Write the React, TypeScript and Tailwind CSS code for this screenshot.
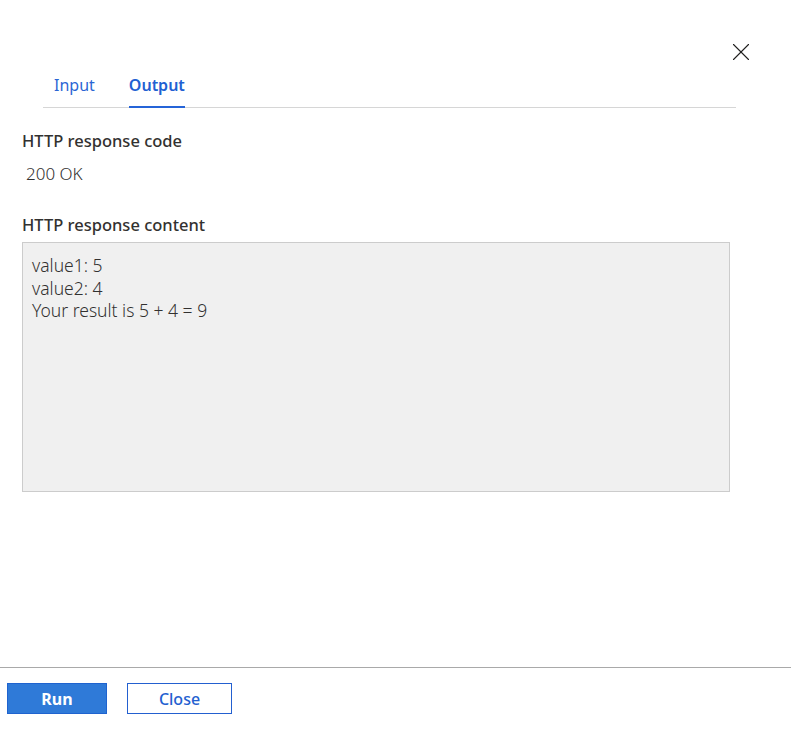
import { X } from "lucide-react";

export default function App() {
  return (
    <div
      className="w-[791px] h-[737px] bg-white flex flex-col text-[#323130] overflow-hidden"
      style={{ fontFamily: '"Noto Sans", "Open Sans", sans-serif' }}
    >
      {/* HEADER */}
      <div className="flex justify-end pt-[37px] pr-[35px] h-[66px]">
        <X size={30} strokeWidth={0.9} className="text-[#201f1e]" />
      </div>

      {/* TABS */}
      <div className="ml-[43px] mr-[55px] flex gap-[34px] pl-[11px] border-b border-[#d6d6d6] h-[42px]">
        <div className="text-[16px] text-[#2b66d4] pt-[7px]">Input</div>
        <div className="text-[16px] font-semibold text-[#2160d2] pt-[7px] border-b-2 border-[#2564d8] -mb-px">
          Output
        </div>
      </div>

      {/* BODY */}
      <div className="px-[22px] flex-1">
        <h3 className="text-[16.5px] font-medium mt-[22px] leading-[22px]">HTTP response code</h3>
        <p className="text-[17px] font-light ml-[4px] mt-[11px] leading-[22px]">200 OK</p>

        <h3 className="text-[16.5px] font-medium mt-[29px] leading-[22px]">HTTP response content</h3>
        <div className="mt-[6px] w-[708px] h-[250px] bg-[#f0f0f0] border border-[#cccccc] px-[9px] pt-[11px] text-[17.5px] font-light leading-[22.5px]">
          <div>value1: 5</div>
          <div>value2: 4</div>
          <div>Your result is 5 + 4 = 9</div>
        </div>
      </div>

      {/* FOOTER */}
      <div className="border-t border-[#a9a9a9] h-[70px] flex items-start gap-[20px] pl-[7px] pt-[15px]">
        <button className="w-[100px] h-[31px] bg-[#2f7ad8] border border-[#1f63cf] text-white font-bold text-[16px]">
          Run
        </button>
        <button className="w-[105px] h-[31px] bg-white border border-[#2360d0] text-[#2360d0] font-medium text-[16px]">
          Close
        </button>
      </div>
    </div>
  );
}
